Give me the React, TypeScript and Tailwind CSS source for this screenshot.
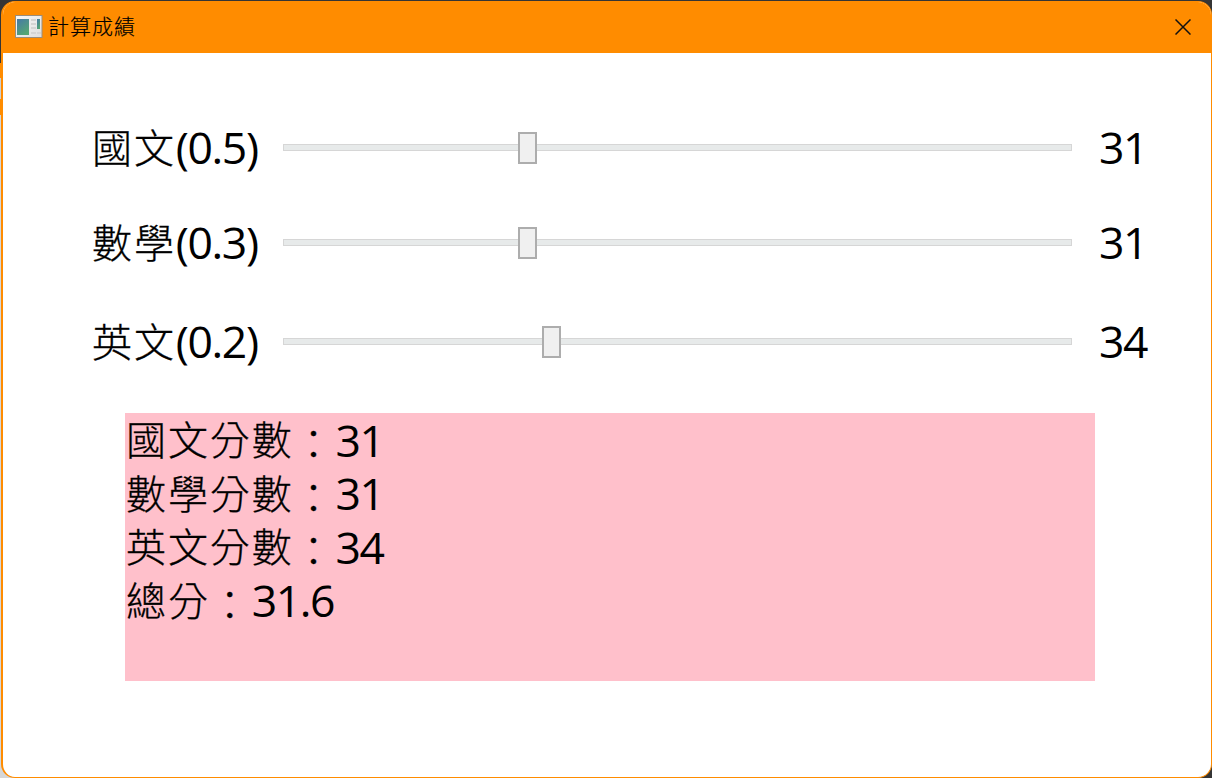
import React from "react";

const Text = ({ cjk, latin, colon }: { cjk?: string; latin: string; colon?: boolean }) => (
  <span className="flex h-[53.5px] items-center whitespace-pre leading-[50px]">
    {cjk && (
      <span className="-mt-[3px] flex font-['Noto_Sans_CJK_TC',sans-serif] text-[40px] font-light tracking-[1.9px] [-webkit-text-stroke:0.3px_black]">
        {cjk}
        {colon && <span className="relative top-[4px]">：</span>}
      </span>
    )}
    <span className="font-['Open_Sans',sans-serif] text-[44.5px] tracking-[-1.4px]">{latin}</span>
  </span>
);

const Row = ({ cjk, latin, value, thumb }: { cjk: string; latin: string; value: string; thumb: number }) => (
  <div className="flex h-[54px] items-center">
    <div className="w-[191px] shrink-0">
      <Text cjk={cjk} latin={latin} />
    </div>
    <div className="relative h-[7px] w-[789px] shrink-0 border border-[#d6d6d6] bg-[#e7eaea]">
      <div
        className="absolute -top-[13px] h-8 w-[19px] border-2 border-[#adadad] bg-[#f0f0f0]"
        style={{ left: thumb }}
      />
    </div>
    <div className="ml-[27px]">
      <Text latin={value} />
    </div>
  </div>
);

const AppIcon = () => (
  <svg width="28" height="23" viewBox="0 0 28 23" className="shrink-0">
    <defs>
      <linearGradient id="pane" x1="0" y1="0" x2="0.6" y2="1">
        <stop offset="0" stopColor="#4579a8" />
        <stop offset="1" stopColor="#55a673" />
      </linearGradient>
      <linearGradient id="frame" x1="0" y1="0" x2="1" y2="1">
        <stop offset="0" stopColor="#f8f8f8" />
        <stop offset="1" stopColor="#dedede" />
      </linearGradient>
    </defs>
    <rect x="0.5" y="0.5" width="26.5" height="22" fill="url(#frame)" stroke="#9a8d7c" />
    <rect x="2" y="4" width="12" height="16" fill="url(#pane)" />
    <path d="M16 5h5M16 9h5M16 13h5M16 18h5M22 18h4" stroke="#d4d4d4" strokeWidth="2" />
    <rect x="22" y="4" width="3" height="10" fill="url(#pane)" />
  </svg>
);

export default function App() {
  return (
    <div className="relative h-[778px] w-[1212px] overflow-hidden bg-[#353535] text-black">
      <div className="absolute left-0 top-0 flex h-full w-5 flex-col">
        <div className="h-[63px]" />
        <div className="h-[15px] bg-[#ff8c00]" />
        <div className="h-[21px] bg-[#cfcfcf]" />
        <div className="h-4 bg-[#ff8c00]" />
        <div className="grow bg-[#d6d6d6]" />
      </div>
      <div className="relative ml-px mt-px flex h-[777px] w-[1211px] flex-col overflow-hidden rounded-[14px] border border-l-2 border-[#ff8c00] bg-white">
        <header className="flex h-[51px] shrink-0 items-center justify-between bg-[#ff8c00] pb-px pl-3 pr-[20px]">
          <div className="-mt-[1px] flex items-center gap-[5px]">
            <AppIcon />
            <h1 className="-mt-1 font-['Noto_Sans_CJK_TC',sans-serif] text-[21px] font-light leading-[30px] tracking-[1px] [-webkit-text-stroke:0.2px_black]">計算成績</h1>
          </div>
          <svg width="16" height="16" viewBox="0 0 16 16" fill="none" stroke="#111" strokeWidth="1.5">
            <path d="M0.5 0.5l15 15M15.5 0.5l-15 15" />
          </svg>
        </header>
        <main className="flex flex-col pl-[89px] pt-[67px]">
          <Row cjk="國文" latin="(0.5)" value="31" thumb={234} />
          <div className="h-[41px]" />
          <Row cjk="數學" latin="(0.3)" value="31" thumb={234} />
          <div className="h-[45px]" />
          <Row cjk="英文" latin="(0.2)" value="34" thumb={258} />
          <section className="ml-[33px] mt-[45px] flex h-[268px] w-[970px] flex-col bg-[#ffc0cb] pl-px">
            <Text cjk="國文分數" colon latin="31" />
            <Text cjk="數學分數" colon latin="31" />
            <Text cjk="英文分數" colon latin="34" />
            <Text cjk="總分" colon latin="31.6" />
          </section>
        </main>
      </div>
    </div>
  );
}
